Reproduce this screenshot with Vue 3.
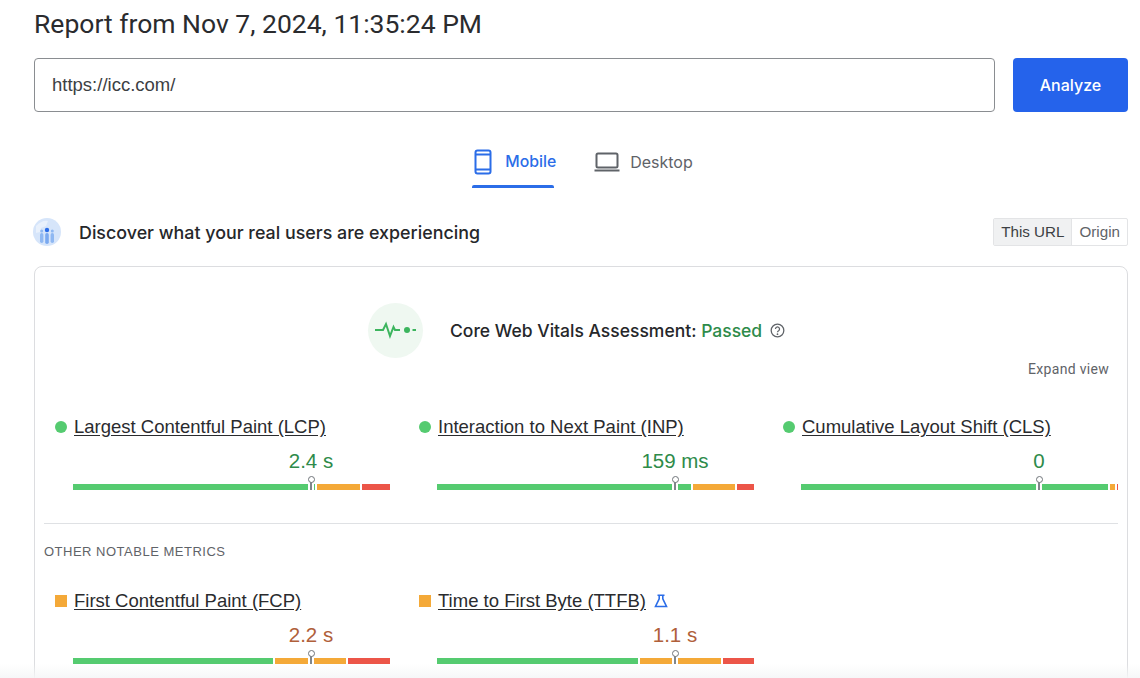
<script setup>
const core = [
  { name: 'Largest Contentful Paint (LCP)', value: '2.4 s', segs: [242, 42.5, 28], dot: 'good' },
  { name: 'Interaction to Next Paint (INP)', value: '159 ms', segs: [254, 42, 16.5], dot: 'good' },
  { name: 'Cumulative Layout Shift (CLS)', value: '0', segs: [307, 5, 1.5], dot: 'good' }
]
const other = [
  { name: 'First Contentful Paint (FCP)', value: '2.2 s', segs: [199.5, 71.5, 42], dot: 'avg' },
  { name: 'Time to First Byte (TTFB)', value: '1.1 s', segs: [200.5, 81.5, 30.5], dot: 'avg', lab: true }
]
</script>

<template>
  <div class="page">
    <h1 class="title">Report from Nov 7, 2024, 11:35:24 PM</h1>

    <div class="search">
      <div class="input">https://icc.com/</div>
      <button class="analyze">Analyze</button>
    </div>

    <div class="tabs">
      <div class="tab active">
        <svg width="18" height="26" viewBox="0 0 18 26" fill="none" stroke="#2b6de8" stroke-width="2">
          <rect x="1.5" y="1.5" width="15" height="23" rx="2" />
          <path d="M1.5 5.5h15M1.5 20.5h15" />
        </svg>
        <span>Mobile</span>
      </div>
      <div class="tab">
        <svg width="26" height="20" viewBox="0 0 26 20" fill="none" stroke="#5f6368" stroke-width="2">
          <rect x="2.5" y="1.5" width="21" height="14" rx="1.5" />
          <path d="M0.5 18.5h25" />
        </svg>
        <span>Desktop</span>
      </div>
    </div>

    <div class="discover">
      <svg class="globe" width="28" height="28" viewBox="0 0 28 28">
        <circle cx="14" cy="14" r="14" fill="#d6e5fa" />
        <path d="M3 8c4-4 8-6 12-5l-2 5-5 2-1 4-4 1z" fill="#e9f1fc" />
        <rect x="7" y="15" width="3.4" height="10" rx="1.7" fill="#8fb8f2" />
        <rect x="12.2" y="15" width="3.6" height="11" rx="1.8" fill="#7aa9f0" />
        <rect x="17.6" y="15" width="3.4" height="10" rx="1.7" fill="#8fb8f2" />
        <circle cx="8.7" cy="13" r="1.5" fill="#8fb8f2" />
        <circle cx="19.3" cy="13" r="1.5" fill="#8fb8f2" />
        <circle cx="14" cy="12" r="2.2" fill="#2b6de8" />
      </svg>
      <div class="discover-text">Discover what your real users are experiencing</div>
      <div class="toggle">
        <span class="on">This URL</span>
        <span>Origin</span>
      </div>
    </div>

    <section class="card">
      <div class="assess">
        <div class="pulse">
          <svg width="44" height="20" viewBox="0 0 44 20" fill="none" stroke="#3cb55e" stroke-width="2">
            <path d="M1 10h8l3-6 4 12 3.500-9 1.500 3h5" />
            <circle cx="33" cy="10" r="3" fill="#3cb55e" stroke="none" />
            <path d="M38.500 10h3.500" />
          </svg>
        </div>
        <div class="assess-text">Core Web Vitals Assessment: <span class="passed">Passed</span></div>
        <svg class="help" width="15" height="15" viewBox="0 0 14 14" fill="none" stroke="#5f6368" stroke-width="1.200">
          <circle cx="7" cy="7" r="5.900" />
          <path d="M5.100 5.600a1.900 1.900 0 1 1 2.900 1.600c-.7.400-1 .8-1 1.500" />
          <circle cx="7" cy="10.400" r=".8" fill="#5f6368" stroke="none" />
        </svg>
      </div>
      <div class="expand">Expand view</div>

      <div class="metrics core">
        <div v-for="m in core" :key="m.name" class="metric">
          <div class="label">
            <span class="dot" :class="m.dot"></span>
            <span class="name">{{ m.name }}</span>
          </div>
          <div class="value" :class="m.dot">{{ m.value }}</div>
          <div class="bar">
            <i class="seg green" :style="{ width: m.segs[0] + 'px' }"></i>
            <i class="seg orange" :style="{ width: m.segs[1] + 'px' }"></i>
            <i class="seg red" :style="{ width: m.segs[2] + 'px' }"></i>
            <span class="marker"></span>
          </div>
        </div>
      </div>

      <div class="other">
        <div class="other-title">OTHER NOTABLE METRICS</div>
        <div class="metrics">
          <div v-for="m in other" :key="m.name" class="metric">
            <div class="label">
              <span class="dot" :class="m.dot"></span>
              <span class="name">{{ m.name }}</span>
              <svg v-if="m.lab" class="flask" width="14" height="14" viewBox="0 0 14 14" fill="none" stroke="#2b6de8" stroke-width="1.600">
                <path d="M3.500 1.200h7M5.200 1.200v3.600L1.500 12.500h11L8.800 4.800V1.200" />
              </svg>
            </div>
            <div class="value" :class="m.dot">{{ m.value }}</div>
            <div class="bar">
              <i class="seg green" :style="{ width: m.segs[0] + 'px' }"></i>
              <i class="seg orange" :style="{ width: m.segs[1] + 'px' }"></i>
              <i class="seg red" :style="{ width: m.segs[2] + 'px' }"></i>
              <span class="marker"></span>
            </div>
          </div>
        </div>
      </div>
    </section>
    <div class="fade"></div>
  </div>
</template>

<style scoped>
.page {
  position: relative;
  height: 678px;
  overflow: hidden;
  box-sizing: border-box;
  padding: 6px 12px 0 34px;
  background: #fff;
  color: #202124;
  font-family: "Liberation Sans", Arial, sans-serif;
}
.title {
  margin: 0;
  font-family: Roboto, "Noto Sans", sans-serif;
  font-weight: 400;
  font-size: 26.500px;
  line-height: 36px;
  color: #2a2b2e;
}
.search {
  display: flex;
  gap: 18px;
  margin-top: 16px;
}
.input {
  flex: 1;
  height: 54px;
  box-sizing: border-box;
  border: 1px solid #8a8d91;
  border-radius: 4px;
  padding-left: 17px;
  font-size: 18.500px;
  line-height: 52px;
  color: #3c4043;
}
.analyze {
  width: 115px;
  height: 54px;
  border: 0;
  border-radius: 4px;
  background: #2563eb;
  color: #fff;
  font-family: Inter, Roboto, sans-serif;
  font-size: 16px;
  font-weight: 500;
}
.tabs {
  display: flex;
  justify-content: center;
  margin-top: 27px;
  padding-left: 5px;
  height: 49px;
}
.tab {
  display: flex;
  align-items: center;
  height: 49px;
  gap: 10px;
  color: #5f6368;
  font-family: Inter, Roboto, sans-serif;
  font-size: 16px;
  font-weight: 400;
  margin-left: 38px;
  position: relative;
  padding-bottom: 4px;
  box-sizing: border-box;
}
.tab.active {
  color: #2b6de8;
  margin-left: 0;
  gap: 13px;
  font-weight: 500;
  font-size: 15.800px;
}
.tab.active::after {
  content: "";
  position: absolute;
  left: -2px;
  right: 2px;
  bottom: 0;
  height: 3px;
  border-radius: 2px 2px 0 0;
  background: #2b6de8;
}
.discover {
  display: flex;
  align-items: center;
  height: 30px;
  margin-top: 29px;
}
.globe {
  flex: none;
  margin-left: -1px;
}
.discover-text {
  flex: 1;
  margin-left: 18px;
  font-family: Inter, Roboto, sans-serif;
  font-size: 17.850px;
  font-weight: 500;
  color: #26272a;
}
.toggle {
  display: flex;
  height: 28px;
  box-sizing: border-box;
  border: 1px solid #e3e4e6;
  border-radius: 2px;
  font-size: 15.200px;
  line-height: 26px;
  color: #5f6368;
}
.toggle span {
  padding: 0 7px;
}
.toggle .on {
  background: #f0f1f2;
  color: #3c4043;
  border-right: 1px solid #e3e4e6;
}
.card {
  margin-top: 19px;
  box-sizing: border-box;
  height: 500px;
  border: 1px solid #dcdde0;
  border-radius: 8px;
  padding: 35px 9px 0;
}
.assess {
  display: flex;
  align-items: center;
  height: 56px;
  padding-left: 324px;
}
.pulse {
  width: 55px;
  height: 55px;
  border-radius: 50%;
  background: #eff8f1;
  display: flex;
  align-items: center;
  justify-content: center;
  flex: none;
}
.assess-text {
  margin-left: 27px;
  font-family: Inter, Roboto, sans-serif;
  font-size: 17.500px;
  font-weight: 500;
  color: #26272a;
}
.passed {
  color: #2e8b4a;
}
.help {
  margin-left: 8px;
}
.expand {
  margin-top: 2px;
  padding-right: 9px;
  text-align: right;
  font-family: Roboto, sans-serif;
  font-size: 14px;
  line-height: 18px;
  letter-spacing: .3px;
  color: #5f6368;
}
.metrics {
  display: grid;
  grid-template-columns: repeat(3, 364px);
  padding-left: 11px;
}
.core {
  margin-top: 37px;
  padding-bottom: 33px;
  border-bottom: 1px solid #dfe1e4;
}
.metric {
  width: 335px;
}
.label {
  display: flex;
  align-items: center;
  height: 24px;
  font-size: 18.500px;
  color: #2a2b2e;
}
.name {
  text-decoration: underline;
  text-underline-offset: 2px;
}
.dot {
  width: 12px;
  height: 12px;
  margin-right: 7px;
  flex: none;
}
.dot.good {
  border-radius: 50%;
  background: #55cb70;
}
.dot.avg {
  background: #f4a938;
}
.flask {
  margin-left: 8px;
}
.value {
  width: 476px;
  margin: 10px 0 0 18px;
  text-align: center;
  font-size: 20.500px;
  line-height: 24px;
}
.value.good {
  color: #2e8b4a;
}
.value.avg {
  color: #b0603a;
}
.bar {
  position: relative;
  display: flex;
  gap: 2px;
  width: 317px;
  height: 6px;
  margin: 11px 0 0 18px;
}
.seg {
  display: block;
  height: 6px;
}
.green {
  background: #55cb70;
}
.orange {
  background: #f4a938;
}
.red {
  background: #ec5548;
}
.marker {
  position: absolute;
  left: 235px;
  top: 0;
  width: 6px;
  height: 6px;
  background: #fff;
}
.marker::before {
  content: "";
  position: absolute;
  left: 2px;
  top: -2px;
  width: 2px;
  height: 8px;
  background: #80868b;
}
.marker::after {
  content: "";
  position: absolute;
  left: -.500px;
  top: -8px;
  width: 7px;
  height: 7px;
  box-sizing: border-box;
  border: 1.500px solid #70757a;
  border-radius: 50%;
  background: #fff;
}
.other-title {
  margin-top: 20px;
  font-size: 13px;
  line-height: 16px;
  letter-spacing: .5px;
  color: #5f6368;
}
.other .metrics {
  margin-top: 29px;
}
.fade {
  position: absolute;
  left: 0;
  right: 0;
  bottom: 0;
  height: 14px;
  background: linear-gradient(rgba(245,246,247,0), rgba(245,246,247,.9));
  pointer-events: none;
}
</style>
